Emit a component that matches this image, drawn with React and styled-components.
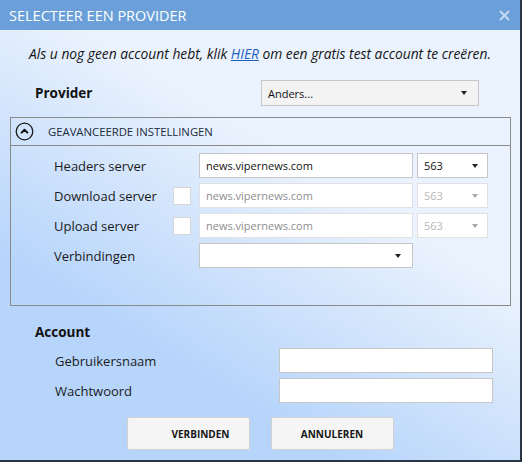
import React from "react";
import styled, { createGlobalStyle } from "styled-components";

const GlobalStyle = createGlobalStyle`
  html, body { margin: 0; padding: 0; background: #ffffff; }
  body { font-family: "Open Sans", "Noto Sans", sans-serif; }
  * { box-sizing: border-box; }
`;

const Window = styled.div`
  width: 522px;
  height: 462px;
  border-right: 2px solid #2b3444;
  border-bottom: 2px solid #2b3444;
  display: flex;
  flex-direction: column;
  overflow: hidden;
`;

const TitleBar = styled.div`
  height: 30px;
  flex: none;
  background: #6a9fd9;
  display: flex;
  align-items: center;
  justify-content: space-between;
  padding: 0 10px 0 9px;
  color: #ffffff;
  font-size: 14.5px;
`;

const CloseButton = styled.div`
  width: 11px;
  height: 11px;
  display: flex;
`;

const Body = styled.div`
  flex: 1;
  display: flex;
  flex-direction: column;
  background: linear-gradient(31deg, #b7d5fb 28%, #eaf2fd 64%);
  color: #1b1b1b;
`;

const Intro = styled.div`
  margin-top: 15px;
  line-height: 18px;
  font-size: 13.8px;
  font-style: italic;
  text-align: center;
  color: #151515;
`;

const Link = styled.a`
  color: #1f5fbf;
  text-decoration: underline;
`;

const ProviderRow = styled.div`
  margin-top: 17px;
  height: 26px;
  display: flex;
  align-items: center;
  padding-left: 35px;
`;

const SectionLabel = styled.div`
  width: ${(p) => p.$width || "auto"};
  font-size: 13.5px;
  font-weight: 700;
  line-height: 20px;
  color: #111;
`;

const Arrow = styled.span`
  width: 0;
  height: 0;
  border-left: 3.5px solid transparent;
  border-right: 3.5px solid transparent;
  border-top: 4px solid ${(p) => (p.$disabled ? "#a9a9a9" : "#222")};
`;

const Select = styled.div`
  width: ${(p) => p.$width}px;
  height: ${(p) => p.$height || 25}px;
  display: flex;
  align-items: center;
  justify-content: space-between;
  padding: 0 ${(p) => p.$padRight || 11}px 0 6px;
  background: ${(p) => (p.$grey ? "#f3f3f3" : "#ffffff")};
  border: 1px solid ${(p) => (p.$disabled ? "#e1e1e1" : "#c6c6c6")};
  font-size: 11px;
  color: ${(p) => (p.$disabled ? "#b8b8b8" : "#111")};
`;

const Group = styled.div`
  margin: 11px 9px 0 10px;
  display: flex;
  flex-direction: column;
`;

const GroupHeader = styled.div`
  height: 29px;
  border: 1px solid #8a8a8a;
  display: flex;
  align-items: center;
  padding-left: 4px;
  gap: 14px;
  font-size: 11.3px;
  color: #1c2a3b;
`;

const GroupContent = styled.div`
  height: 160px;
  border: 1px solid #8a8a8a;
  border-top: none;
  padding: 7px 0 0 43px;
  display: flex;
  flex-direction: column;
  gap: 5px;
`;

const FieldRow = styled.div`
  height: 25px;
  display: flex;
  align-items: center;
`;

const FieldLabel = styled.div`
  width: ${(p) => p.$width}px;
  flex: none;
  font-size: 13px;
  color: #1b1b1b;
`;

const CheckSlot = styled.div`
  width: 26px;
  flex: none;
  display: flex;
`;

const CheckBox = styled.div`
  width: 18px;
  height: 18px;
  background: #ffffff;
  border: 1px solid #d6d6d6;
`;

const TextInput = styled.div`
  width: 214px;
  height: 25px;
  flex: none;
  display: flex;
  align-items: center;
  padding-left: 6px;
  background: #ffffff;
  border: 1px solid ${(p) => (p.$disabled ? "#e1e1e1" : "#c6c6c6")};
  font-size: 11px;
  color: ${(p) => (p.$disabled ? "#8d8d8d" : "#111")};
`;

const PortSlot = styled.div`
  margin-left: 4px;
  display: flex;
`;

const AccountBlock = styled.div`
  margin-top: 16px;
  padding-left: 35px;
`;

const AccountRows = styled.div`
  margin-top: 6px;
  padding-left: 20px;
  display: flex;
  flex-direction: column;
  gap: 5px;
`;

const ButtonRow = styled.div`
  margin-top: 14px;
  display: flex;
  justify-content: center;
  gap: 21px;
`;

const Button = styled.div`
  width: 123px;
  height: 33px;
  display: flex;
  align-items: center;
  justify-content: center;
  padding-left: ${(p) => p.$shift || 0}px;
  background: #f5f5f5;
  border: 1px solid #d3d3d3;
  border-radius: 2px;
  font-size: 10px;
  font-weight: 700;
  color: #161616;
`;

const ExpandIcon = () => (
  <svg width="19" height="19" viewBox="0 0 19 19">
    <circle cx="9.5" cy="9.5" r="8.3" fill="none" stroke="#1a1a1a" strokeWidth="1.3" />
    <path d="M6.6 10.6 L9.5 7.7 L12.4 10.6" fill="none" stroke="#111" strokeWidth="2" strokeLinecap="round" strokeLinejoin="round" />
  </svg>
);

const CloseIcon = () => (
  <svg width="11" height="11" viewBox="0 0 11 11">
    <path d="M1 1 L10 10 M10 1 L1 10" stroke="#c6dbf3" strokeWidth="1.9" />
  </svg>
);

const servers = [
  { label: "Headers server", check: false, disabled: false },
  { label: "Download server", check: true, disabled: true },
  { label: "Upload server", check: true, disabled: true },
];

export default function App() {
  return (
    <>
      <GlobalStyle />
      <Window>
        <TitleBar>
          <span>SELECTEER EEN PROVIDER</span>
          <CloseButton>
            <CloseIcon />
          </CloseButton>
        </TitleBar>
        <Body>
          <Intro>
            Als u nog geen account hebt, klik <Link>HIER</Link> om een gratis test account te creëren.
          </Intro>
          <ProviderRow>
            <SectionLabel $width="226px">Provider</SectionLabel>
            <Select $width={218} $height={26} $grey $padRight={11}>
              <span>Anders...</span>
              <Arrow />
            </Select>
          </ProviderRow>
          <Group>
            <GroupHeader>
              <ExpandIcon />
              <span>GEAVANCEERDE INSTELLINGEN</span>
            </GroupHeader>
            <GroupContent>
              {servers.map((s) => (
                <FieldRow key={s.label}>
                  <FieldLabel $width={119}>{s.label}</FieldLabel>
                  <CheckSlot>{s.check && <CheckBox />}</CheckSlot>
                  <TextInput $disabled={s.disabled}>news.vipernews.com</TextInput>
                  <PortSlot>
                    <Select $width={71} $disabled={s.disabled} $padRight={9}>
                      <span>563</span>
                      <Arrow $disabled={s.disabled} />
                    </Select>
                  </PortSlot>
                </FieldRow>
              ))}
              <FieldRow>
                <FieldLabel $width={145}>Verbindingen</FieldLabel>
                <Select $width={214} $padRight={11}>
                  <span />
                  <Arrow />
                </Select>
              </FieldRow>
            </GroupContent>
          </Group>
          <AccountBlock>
            <SectionLabel>Account</SectionLabel>
            <AccountRows>
              <FieldRow>
                <FieldLabel $width={224}>Gebruikersnaam</FieldLabel>
                <TextInput />
              </FieldRow>
              <FieldRow>
                <FieldLabel $width={224}>Wachtwoord</FieldLabel>
                <TextInput />
              </FieldRow>
            </AccountRows>
          </AccountBlock>
          <ButtonRow>
            <Button $shift={25}>VERBINDEN</Button>
            <Button>ANNULEREN</Button>
          </ButtonRow>
        </Body>
      </Window>
    </>
  );
}
